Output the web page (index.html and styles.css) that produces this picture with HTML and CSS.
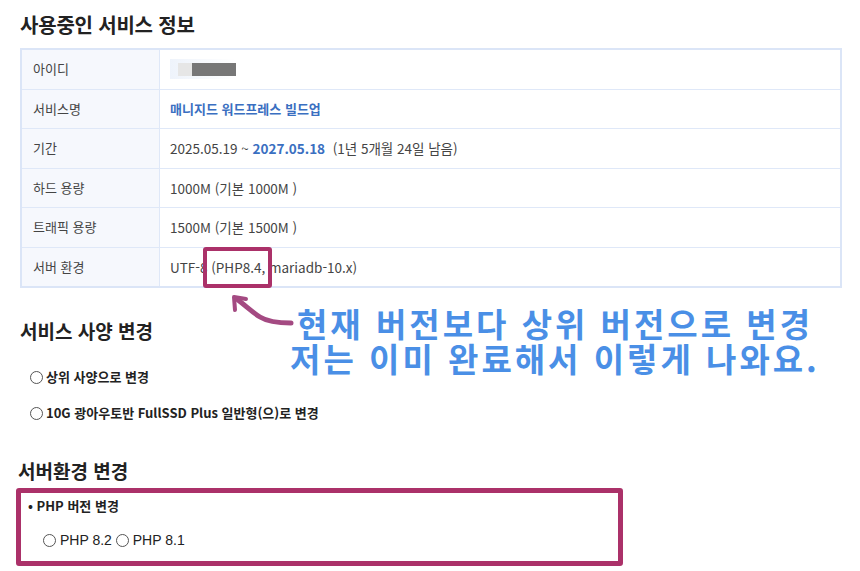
FILE: index.html
```html
<!DOCTYPE html>
<html lang="ko">
<head>
<meta charset="utf-8">
<link rel="stylesheet" href="styles.css">
</head>
<body>
<div class="page">
  <h1 class="title">사용중인 서비스 정보</h1>
  <table class="info">
    <tr><th>아이디</th><td><span class="blur"><span class="b1"></span><span class="b2"></span></span></td></tr>
    <tr><th>서비스명</th><td class="link">매니지드 워드프레스 빌드업</td></tr>
    <tr><th>기간</th><td>2025.05.19 ~ <b class="blue">2027.05.18</b> &nbsp;(1년 5개월 24일 남음)</td></tr>
    <tr><th>하드 용량</th><td>1000M (기본 1000M )</td></tr>
    <tr><th>트래픽 용량</th><td>1500M (기본 1500M )</td></tr>
    <tr><th>서버 환경</th><td>UTF-8 (PHP8.4, mariadb-10.x)</td></tr>
  </table>

  <h2 class="sec sec1">서비스 사양 변경</h2>
  <p class="opt opt1"><span class="radio"></span>상위 사양으로 변경</p>
  <p class="opt opt2"><span class="radio"></span>10G 광아우토반 FullSSD Plus 일반형(으)로 변경</p>

  <h2 class="sec sec2">서버환경 변경</h2>
  <div class="envbox">
    <p class="bullet">• PHP 버전 변경</p>
    <p class="php"><span class="radio"></span>PHP 8.2 <span class="radio"></span>PHP 8.1</p>
  </div>

  <div class="hl"></div>
  <svg class="arrow" width="80" height="40" viewBox="0 0 80 40">
    <path d="M73 33 C60 33 50 32 42 27 C34 22 28 16 20 10" fill="none" stroke="#a44a82" stroke-width="5" stroke-linecap="round"/>
    <path d="M17 20 L16 7 L28 9" fill="none" stroke="#a44a82" stroke-width="4" stroke-linecap="round" stroke-linejoin="round"/>
  </svg>
  <div class="note">
    <div class="nl">현재 버전보다 상위 버전으로 변경</div>
    <div class="nl">저는 이미 완료해서 이렇게 나와요.</div>
  </div>
</div>
</body>
</html>
```
FILE: styles.css
```css
html, body { margin: 0; padding: 0; background: #fff; }
body { font-family: "Noto Sans CJK KR", "Noto Sans", sans-serif; color: #333; }
.page { position: relative; width: 860px; height: 571px; overflow: hidden; padding: 12px 0 0 20px; box-sizing: border-box; }
.title { margin: 0; font-size: 20px; font-weight: 700; color: #222; line-height: 26px; letter-spacing: -0.2px; }
.info { margin-top: 10px; width: 822px; border-collapse: collapse; border: 2px solid #dbe5f7; font-size: 13.5px; }
.info th, .info td { height: 38.5px; border: 1px solid #dfe8f8; padding: 0 0 0 11px; text-align: left; font-weight: 400; color: #444; line-height: 18px; }
.info th { width: 126px; background: #f6f8fd; font-size: 13px; }
.info td { padding-left: 10px; }
.link { color: #3a6fc1 !important; font-weight: 700 !important; font-size: 13px; }
.blue { color: #3a6fc1; }
.blur { display: inline-flex; align-items: center; height: 20px; padding-left: 8px; background: linear-gradient(90deg, #eef3fb, #fff); }
.b1 { display: inline-block; width: 14px; height: 13px; background: #e6e6e6; }
.b2 { display: inline-block; width: 44px; height: 13px; background: #777; }
.sec { margin: 0; font-size: 19px; font-weight: 700; color: #222; line-height: 26px; }
.sec1 { margin-top: 30px; }
.radio { display: inline-block; width: 11px; height: 11px; border: 1px solid #555; border-radius: 50%; margin-right: 3px; vertical-align: -2px; }
.opt { margin: 0; font-size: 13px; font-weight: 700; color: #222; padding-left: 10px; line-height: 20px; }
.opt1 { margin-top: 23px; }
.opt2 { margin-top: 16px; }
.sec2 { margin-top: 35px; margin-left: -2px; }
.envbox { margin-top: 4px; margin-left: -4px; width: 607px; height: 78px; box-sizing: border-box; border: 5px solid #ab3169; border-radius: 3px; padding: 3px 0 0 7px; }
.bullet { margin: 0; font-size: 13px; font-weight: 700; color: #222; line-height: 20px; }
.php { margin: 14px 0 0 15px; color: #222; line-height: 20px; font-family: "Liberation Sans", "Noto Sans CJK KR", sans-serif; font-size: 14px; }
.php .radio { margin-right: 4px; }
.hl { position: absolute; left: 203px; top: 247px; width: 69px; height: 41px; box-sizing: border-box; border: 4px solid #ab3169; border-radius: 3px; }
.arrow { position: absolute; left: 218px; top: 290px; }
.note { position: absolute; left: 282px; top: 305px; width: 546px; text-align: center; color: #4a8fe6; font-size: 33px; font-weight: 700; letter-spacing: 3px; }
.nl { line-height: 36px; height: 35px; }
```
